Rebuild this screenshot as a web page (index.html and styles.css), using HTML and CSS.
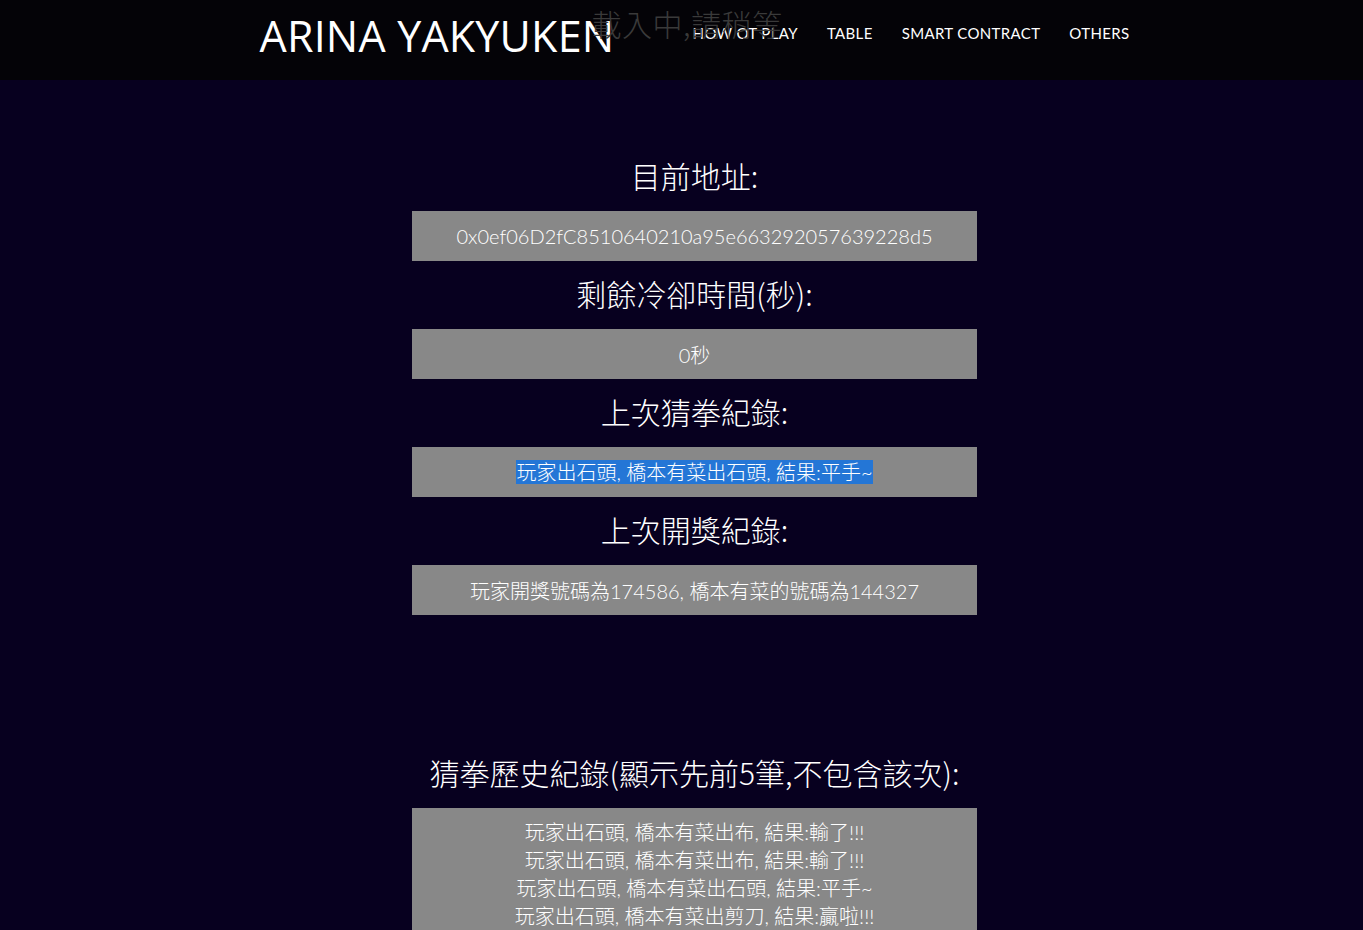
FILE: index.html
```html
<!DOCTYPE html>
<html lang="zh-Hant">
<head>
<meta charset="utf-8">
<title>Arina Yakyuken</title>
<link rel="stylesheet" href="styles.css">
</head>
<body>
<header class="topbar">
  <div class="container bar-inner">
    <a class="brand" href="#">ARINA YAKYUKEN</a>
    <nav class="nav">
      <a href="#">HOW OT PLAY</a>
      <a href="#">TABLE</a>
      <a href="#">SMART CONTRACT</a>
      <a href="#">OTHERS</a>
    </nav>
    <div class="loading">載入中,請稍等</div>
  </div>
</header>
<main class="container">
  <section class="panel">
    <h2 class="title">目前地址:</h2>
    <div class="box">0x0ef06D2fC8510640210a95e663292057639228d5</div>
    <h2 class="title">剩餘冷卻時間(秒):</h2>
    <div class="box">0秒</div>
    <h2 class="title">上次猜拳紀錄:</h2>
    <div class="box"><span class="selected">玩家出石頭, 橋本有菜出石頭, 結果:平手~</span></div>
    <h2 class="title">上次開獎紀錄:</h2>
    <div class="box">玩家開獎號碼為174586, 橋本有菜的號碼為144327</div>
  </section>
  <section class="panel history">
    <h2 class="title">猜拳歷史紀錄(顯示先前5筆,不包含該次):</h2>
    <div class="box list">
      <div>玩家出石頭, 橋本有菜出布, 結果:輸了!!!</div>
      <div>玩家出石頭, 橋本有菜出布, 結果:輸了!!!</div>
      <div>玩家出石頭, 橋本有菜出石頭, 結果:平手~</div>
      <div>玩家出石頭, 橋本有菜出剪刀, 結果:贏啦!!!</div>
      <div>玩家出石頭, 橋本有菜出布, 結果:輸了!!!</div>
    </div>
  </section>
</main>
</body>
</html>
```

FILE: styles.css
```css
* { box-sizing: border-box; }
html, body {
  margin: 0;
  padding: 0;
  background: #07001f;
  color: #ffffff;
  font-family: "Noto Sans CJK TC", "Noto Sans", sans-serif;
}
.container {
  width: 896px;
  padding-left: 26px;
  margin: 0 auto;
}
.topbar {
  background: #040307;
  height: 80px;
}
.bar-inner {
  position: relative;
  display: flex;
  align-items: center;
  height: 80px;
}
.brand {
  font-family: "Open Sans", "Noto Sans", sans-serif;
  font-size: 43px;
  color: #ffffff;
  text-decoration: none;
  letter-spacing: 0.2px;
  margin-top: -10px;
}
.nav {
  display: flex;
  gap: 29px;
  margin-left: auto;
  margin-top: -14px;
}
.nav a {
  color: #ffffff;
  text-decoration: none;
  font-family: "Lato", "Noto Sans", sans-serif;
  font-size: 15px;
  letter-spacing: 0.35px;
}
.loading {
  position: absolute;
  left: 358px;
  top: 1px;
  font-size: 30px;
  color: #3a3a3a;
  font-weight: 300;
  letter-spacing: 0.5px;
}
.panel {
  width: 565px;
  margin: 0 auto;
}
.panel:first-child {
  padding-top: 63px;
}
.title {
  font-weight: 300;
  font-size: 30px;
  line-height: 40px;
  margin: 12px 0 16px;
  text-align: center;
  color: #ffffff;
}
.box {
  background: #888888;
  height: 50px;
  display: flex;
  align-items: center;
  justify-content: center;
  font-family: "Lato", "Noto Sans CJK TC", sans-serif;
  font-size: 20px;
  font-weight: 300;
  color: #ffffff;
}
.selected {
  background: #2476d6;
  line-height: 24px;
}
.history {
  margin-top: 137px;
}
.list {
  height: auto;
  display: block;
  text-align: center;
  padding: 10px 0;
  line-height: 28px;
}
```
